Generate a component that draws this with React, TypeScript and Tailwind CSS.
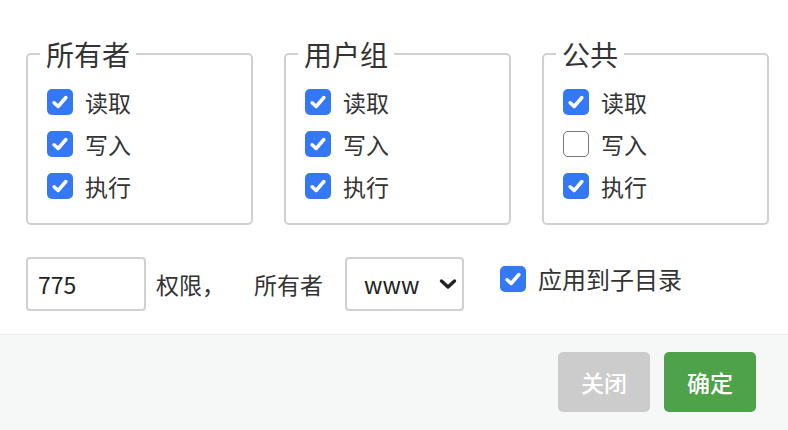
import React from "react";

const font = { fontFamily: '"Noto Sans CJK SC", "Noto Sans", sans-serif' };

function Check({ checked }: { checked: boolean }) {
  if (checked) {
    return (
      <span className="flex h-[26px] w-[26px] shrink-0 items-center justify-center rounded-[5px] bg-[#3478f6]">
        <svg width="20" height="20" viewBox="0 0 16 16">
          <path d="M3.3 8.6 L6.5 11.6 L12.7 4.4" fill="none" stroke="#fff" strokeWidth="2.8" strokeLinecap="round" strokeLinejoin="round" />
        </svg>
      </span>
    );
  }
  return <span className="h-[26px] w-[26px] shrink-0 rounded-[5px] border-[1.5px] border-[#7a7a7a] bg-white" />;
}

function Group({ title, items }: { title: string; items: [string, boolean][] }) {
  return (
    <fieldset className="w-[227px] rounded-[5px] border-2 border-[#d0d0d0] pb-[16px] pt-[10px]">
      <legend className="ml-[12px] px-[6px] text-[28px] leading-[34px] text-[#333]">{title}</legend>
      <div className="pl-[19px]">
        {items.map(([label, c]) => (
          <div key={label} className="flex h-[42px] items-center gap-[12px]">
            <Check checked={c} />
            <span className="text-[23px] text-[#333]">{label}</span>
          </div>
        ))}
      </div>
    </fieldset>
  );
}

export default function App() {
  return (
    <div className="h-[430px] w-[788px] overflow-hidden bg-white" style={font}>
      <div className="pl-[26px] pr-[18px] pt-[37px]">
        <div className="flex gap-[31px]">
          <Group title="所有者" items={[["读取", true], ["写入", true], ["执行", true]]} />
          <Group title="用户组" items={[["读取", true], ["写入", true], ["执行", true]]} />
          <Group title="公共" items={[["读取", true], ["写入", false], ["执行", true]]} />
        </div>
        <div className="mt-[32px] flex h-[54px] items-center">
          <div className="flex h-[54px] w-[120px] items-center rounded-[4px] border-2 border-[#d0d0d0] pl-[10px] text-[23px] text-[#222]">775</div>
          <span className="ml-[10px] text-[23px] text-[#333]">权限，</span>
          <span className="ml-[29px] text-[23px] text-[#333]">所有者</span>
          <div className="ml-[22px] flex h-[54px] w-[119px] items-center rounded-[4px] border-2 border-[#d0d0d0] pl-[17px]">
            <span className="text-[23px] text-[#222]">www</span>
            <svg className="ml-[20px]" width="18" height="12" viewBox="0 0 18 12">
              <path d="M2.5 3 L9 9 L15.5 3" fill="none" stroke="#222" strokeWidth="3.4" strokeLinecap="round" strokeLinejoin="round" />
            </svg>
          </div>
          <div className="mb-[10px] ml-[36px] flex items-center gap-[12px]">
            <Check checked={true} />
            <span className="text-[24px] text-[#333]">应用到子目录</span>
          </div>
        </div>
      </div>
      <div className="mt-[23px] flex h-[100px] justify-end gap-[14px] border-t border-[#e8eaea] bg-[#f6f7f7] pr-[32px] pt-[17px]">
        <div className="flex h-[60px] w-[92px] items-center justify-center rounded-[5px] bg-[#cccccc] text-[23px] font-medium text-white">关闭</div>
        <div className="flex h-[60px] w-[92px] items-center justify-center rounded-[5px] bg-[#4ea24a] text-[23px] font-medium text-white">确定</div>
      </div>
    </div>
  );
}
